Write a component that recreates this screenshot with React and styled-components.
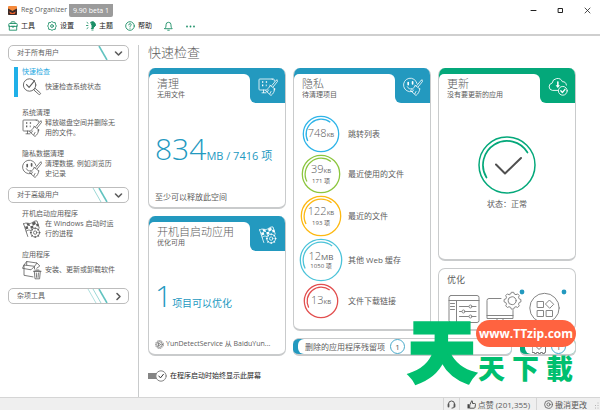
import React from 'react';
import styled, { createGlobalStyle } from 'styled-components';

const BLUE = '#2399bf';
const GREEN = '#04a87a';
const LINE = '#c9cbcc';
const INK = '#5c5c5c';

const Global = createGlobalStyle`
  * { box-sizing: border-box; }
  body {
    margin: 0;
    background: #fff;
    color: ${INK};
    font: 7px/10px "Open Sans", "Noto Sans CJK SC", sans-serif;
  }
  button { font: inherit; color: inherit; background: none; border: 0; padding: 0; margin: 0; }
  h1, h2, p { margin: 0; font-weight: 400; }
  svg { flex: none; }
`;

const Window = styled.div`
  min-height: 100vh;
  display: flex;
  flex-direction: column;
  position: relative;
`;
const TitleBar = styled.header`
  display: flex;
  align-items: center;
  height: 18px;
  padding: 2px 8px 0;
`;
const AppName = styled.span`
  margin: 0 2px 0 4px;
  white-space: nowrap;
`;
const Version = styled.span`
  background: #9b9b9b;
  color: #fff;
  line-height: 13px;
  padding: 0 4px;
  border-radius: 0 0 2px 2px;
  white-space: nowrap;
`;
const WindowButtons = styled.div`
  display: flex;
  gap: 18px;
  margin-left: auto;
`;
const WindowButton = styled.button`
  display: flex;
  align-items: center;
`;
const Toolbar = styled.nav`
  display: flex;
  align-items: center;
  gap: 12px;
  height: 18px;
  padding: 0 8px;
  border-bottom: 2px solid #cfcfcf;
  color: #222;
`;
const ToolButton = styled.button`
  display: flex;
  align-items: center;
  gap: 3px;
  white-space: nowrap;
`;
const Body = styled.div`
  flex: 1;
  display: flex;
`;
const Sidebar = styled.aside`
  flex: 0 0 138px;
  padding: 9px 9px 9px 8px;
`;
const GroupButton = styled.button`
  display: flex;
  align-items: center;
  width: 100%;
  height: 16px;
  padding: 0 5px 0 8px;
  border: 1px solid #bdbdbd;
  border-radius: 5px;
`;
const Stripes = styled.svg`
  margin-left: auto;
  margin-right: 5px;
`;
const Group = styled.div`
  display: grid;
  gap: 11px;
  padding: 6px 0 8px 6px;
`;
const NavItem = styled.a`
  display: block;
  height: 30px;
  padding-left: 4px;
  border-left: 4px solid ${(p) => (p.$active ? '#1fb0e8' : 'transparent')};
  color: inherit;
  text-decoration: none;
`;
const NavTitle = styled.span`
  display: block;
  color: ${(p) => (p.$active ? '#1fa9e1' : 'inherit')};
`;
const NavBody = styled.span`
  display: flex;
  align-items: center;
  gap: 3px;
  height: 20px;
  padding-right: 12px;
`;
const Main = styled.main`
  flex: 1;
  display: flex;
  flex-direction: column;
  margin-top: 9px;
  padding: 0 24px 15px 9px;
  border-left: 1px solid ${LINE};
`;
const PageTitle = styled.h1`
  font-size: 13px;
  line-height: 15px;
  font-weight: 300;
  margin-bottom: 8px;
`;
const Board = styled.div`
  flex: 1;
  display: grid;
  grid-template-columns: repeat(3, 1fr);
  gap: 7px;
`;
const Column = styled.div`
  display: flex;
  flex-direction: column;
  gap: 7px;
  min-width: 0;
`;
const Wide = styled(Column)`
  grid-column: span 2;
`;
const WideTop = styled.div`
  flex: 1;
  display: grid;
  grid-template-columns: 1fr 1fr;
  gap: 7px;
`;
const CardBox = styled.section`
  flex: 1 1 0;
  display: flex;
  flex-direction: column;
  min-width: 0;
  border: 1px solid ${LINE};
  border-bottom-width: 2px;
  border-top: 0;
  border-radius: 7px;
  overflow: hidden;
`;
const CardHead = styled.div`
  display: flex;
  background: ${(p) => p.$color};
`;
const CardTitles = styled.div`
  flex: 1;
  margin-top: 6px;
  padding: 3px 0 0 8px;
  background: #fff;
  border-radius: 5px 6px 0 0;
`;
const CardTitle = styled.h2`
  font-size: 11px;
  line-height: 13px;
  font-weight: 300;
`;
const TabCorner = styled.div`
  background: #fff;
`;
const Tab = styled.div`
  display: flex;
  align-items: center;
  justify-content: center;
  width: 35px;
  height: 35px;
  padding-top: 3px;
  background: ${(p) => p.$color};
  border-radius: 0 0 0 6px;
  color: #fff;
`;
const Metric = styled.p`
  display: flex;
  align-items: baseline;
  padding: 10px 0 0 6px;
  margin: auto 0;
  color: ${BLUE};
  font-size: ${(p) => p.$size};
  line-height: 32px;
  white-space: nowrap;
`;
const Big = styled.span`
  font-size: 30px;
  font-weight: 300;
`;
const CardNote = styled.p`
  display: flex;
  align-items: center;
  gap: 2px;
  padding: 0 6px 5px;
  font-size: ${(p) => (p.$small ? '7px' : '8px')};
  line-height: 10px;
  white-space: nowrap;
`;
const RingList = styled.ul`
  list-style: none;
  display: grid;
  gap: 1px;
  margin: 12px 0 0;
  padding: 0;
`;
const RingRow = styled.li`
  display: flex;
  align-items: center;
  font-size: 8px;
`;
const RingCell = styled.div`
  display: grid;
  place-items: center;
  width: 54px;
  > * { grid-area: 1 / 1; }
`;
const RingText = styled.div`
  text-align: center;
  font-size: 6px;
  line-height: 8px;
`;
const RingValue = styled.div`
  font-size: 11px;
  line-height: 11px;
  font-weight: 300;
`;
const Unit = styled.span`
  font-size: ${(p) => (p.$large ? '8px' : '6px')};
  font-weight: 400;
`;
const UpdateBox = styled.div`
  flex: 1;
  display: flex;
  flex-direction: column;
  align-items: center;
  gap: 5px;
  padding-top: 33px;
  font-size: 8px;
`;
const OptimizeBox = styled.section`
  height: 63px;
  padding: 5px 8px;
  border: 1px solid ${LINE};
  border-bottom-width: 2px;
  border-radius: 7px;
`;
const OptimizeTitle = styled.h2`
  font-size: 9px;
  line-height: 12px;
`;
const OptimizeIcons = styled.div`
  display: flex;
  justify-content: space-between;
  margin-top: 3px;
`;
const BottomRow = styled.div`
  display: flex;
  gap: 8px;
`;
const Strip = styled.button`
  flex: ${(p) => (p.$grow ? '1' : '0 0 56px')};
  display: flex;
  height: 18px;
  border: 1px solid ${LINE};
  border-left: 0;
  border-bottom-width: 2px;
  border-radius: 6px;
  background: ${(p) => p.$color};
  overflow: hidden;
`;
const StripInner = styled.span`
  flex: 1;
  display: flex;
  align-items: center;
  gap: 5px;
  height: 100%;
  margin-left: 5px;
  padding-left: 7px;
  background: #fff;
  border-radius: 6px 0 0 6px;
  font-size: 8px;
`;
const Count = styled.span`
  width: 15px;
  height: 15px;
  border: 1px solid #49a9c9;
  border-radius: 50%;
  line-height: 13px;
  text-align: center;
`;
const Toggle = styled.label`
  display: flex;
  align-items: center;
  gap: 3px;
  margin-top: 14px;
  height: 12px;
  color: #222;
`;
const ToggleInput = styled.input`
  appearance: none;
  width: 19px;
  height: 12px;
  margin: 0;
  background: linear-gradient(#858585, #858585) 0 50% / 13px 6px no-repeat;
  border-radius: 3px;
  grid-area: 1 / 1;
`;
const ToggleBox = styled.span`
  display: grid;
  justify-items: end;
  align-items: center;
  svg { grid-area: 1 / 1; pointer-events: none; }
`;
const StatusBar = styled.footer`
  display: flex;
  justify-content: flex-end;
  height: 13px;
  padding-right: 1px;
  background: #efefef;
  border-top: 1px solid #d5d5d5;
  font-size: 8px;
`;
const StatusButton = styled.button`
  display: flex;
  align-items: center;
  gap: 2px;
  padding: 1px 6px 0 7px;
  border-left: 1px solid #d5d5d5;
  white-space: nowrap;
  &:first-child { padding: 1px 3px 0; }
`;
const Watermark = styled.div`
  position: absolute;
  right: 24px;
  bottom: 24px;
  width: 168px;
  height: 72px;
  color: #00bf6f;
  font-family: "Noto Sans CJK SC", sans-serif;
  font-weight: 900;
  pointer-events: none;
`;
const MarkBig = styled.span`
  position: absolute;
  left: 0;
  top: 0;
  font-size: 68px;
  line-height: 68px;
  -webkit-text-stroke: 3px #00bf6f;
  stroke-linejoin: round;
`;
const MarkSmall = styled.span`
  position: absolute;
  right: 3px;
  bottom: 0;
  display: flex;
  gap: 7px;
  font-size: 27px;
  line-height: 36px;
  white-space: nowrap;
`;
const MarkPill = styled.span`
  position: absolute;
  right: 0;
  top: 6px;
  width: 100px;
  border-radius: 14px;
  background: #ff6340;
  color: #fff;
  font: 700 12px/27px "Open Sans", sans-serif;
  text-align: center;
`;

const Svg = ({ w, h, box, children, sw = 1, ...rest }) => (
  <svg width={w} height={h} viewBox={box || `0 0 ${w} ${h}`} fill="none" stroke="currentColor"
    strokeWidth={sw} strokeLinecap="round" strokeLinejoin="round" aria-hidden="true" {...rest}>{children}</svg>
);

const Brush = () => (
  <path d="M18.3 3.2 13.8 8.5M18.3 3.2c1-.8 2 .2 1.3 1.1l-4.3 5.4M12 8.3l4.8 3.6M12.2 8.5C11 11 9.5 12.5 7.5 13.6l5.5 4.9c2-1.6 3.4-3.6 3.8-6.6M10.5 13l-1 1.6M13 14.5l-1.2 2.3" />
);
const CleanIcon = ({ sw = 0.8, s = 20 }) => (
  <Svg w={s} h={s} box="0 0 20 20" sw={sw}>
    <path d="M14.5 2.3V2H1.8Q1 2 1 2.8v9.4q0 .8.8.8h6M16.3 4V3q0-1-1-1H14M16.4 12v1h-.6M5.5 13v2.6M4 15.8h4" />
    <path d="M4 5h1.3M7.8 5h1.3M4 8.4h1.3M7.8 8.4h.8" strokeWidth="1.6" strokeLinecap="butt" />
    <Brush />
  </Svg>
);
const PrivacyIcon = ({ sw = 0.8, s = 20 }) => (
  <Svg w={s} h={s} box="0 0 20 20" sw={sw}>
    <path d="M9 14.6A6.8 6.8 0 1 1 14 6.5M4.3 9.7c1 2 2.6 2.7 4.6 2" />
    <path d="M5.2 5.6v2M9.6 4.8v2" strokeWidth="1.7" />
    <Brush />
  </Svg>
);
const StartupIcon = ({ sw = 0.8, s = 20 }) => (
  <Svg w={s} h={s} box="0 0 20 20" sw={sw}>
    <path d="M1.5 4.5 5.8 17.5M1.7 5C4.5 2.5 7 5.6 9.5 4S13.5 1.5 15 2l2.2 7M4.2 12.2c1.5-1.3 2.8-1.4 4.4-.8" />
    <path d="m4.5 4 2.8.4.8 2.7-2.9-.6zM10 4l3-1.7.9 2.6-3 1.8zM3 7.8l2.6-.9.8 2.6-2.6.9zM8.2 7.2l2.8-.5.6 2.3-2.7.7zM14 4.9l2.2-.3.8 2.5-2.3.5z" fill="currentColor" stroke="none" />
    <circle cx="13.2" cy="13.6" r="4.4" />
    <circle cx="13.2" cy="13.6" r="1.7" />
    <path d="M13.2 8.8v1M13.2 17.4v1M8.4 13.6h1M17 13.6h1M9.8 10.2l.7.7M16 16.4l.7.7M16.6 10.2l-.7.7M10.4 16.4l-.7.7" strokeWidth="1.1" />
  </Svg>
);
const CheckupIcon = () => (
  <Svg w={20} h={20} sw={0.9}>
    <circle cx="7.6" cy="8" r="6.2" />
    <path d="m4.5 7.6 2.6 2.8L12.6 3.6" strokeWidth="1.1" />
    <path d="m12 12.6 1.2-1.2 5 4.4c1 1-.5 2.5-1.5 1.5z" />
  </Svg>
);
const AppsIcon = () => (
  <Svg w={20} h={20} sw={0.8}>
    <path d="m2 5 2.7-3.5L15 3l-2.5 3.3L2 5v10.3l9 1.6M2 5 .5 8.3 9 9.8l3.5-3.5V9M4.7 1.5V5M15 3l2.8 3-3 2.2" />
    <path d="M12.3 11.5 13 18.8h4.6l.7-7.3zM11.5 11.3h7.6M13.8 10h3M14.3 13l.3 4.4M16.4 13l-.3 4.4" />
  </Svg>
);
const CloudIcon = () => (
  <Svg w={20} h={20} sw={0.9}>
    <path d="M10 13.4H4.4a3.7 3.7 0 0 1-.3-7.3A5.4 5.4 0 0 1 14.4 4.7a3.8 3.8 0 0 1 4 3.4M9.8 5v4" />
    <path d="M7.6 8.2h4.4L9.8 11z M9.2 4.6h1.3V9H9.2z" fill="currentColor" stroke="none" />
    <circle cx="14.8" cy="13.8" r="4.4" />
    <path d="m12.8 13.8 1.6 1.7 2.6-3.2" strokeWidth="1.3" />
  </Svg>
);

const Ring = ({ r, color }) => {
  const c = r + 1;
  const k = r - 3;
  const x1 = c - k * 0.88, y1 = c + k * 0.47, x2 = c + k * 0.62, y2 = c - k * 0.78;
  return (
    <svg width={c * 2} height={c * 2} fill="none" stroke={color} aria-hidden="true">
      <circle cx={c} cy={c} r={r - 0.3} strokeWidth="1.3" />
      <path d={`M${x1} ${y1}A${k} ${k} 0 0 1 ${x2} ${y2}`} strokeWidth="1.3" />
    </svg>
  );
};

const rings = [
  { n: '748', u: 'KB', label: '跳转列表', r: 18, color: '#2fb4e8' },
  { n: '39', u: 'KB', sub: '171 项', label: '最近使用的文件', r: 19, color: '#8cc63f' },
  { n: '122', u: 'KB', sub: '193 项', label: '最近的文件', r: 20, color: '#fdb913' },
  { n: '12', u: 'MB', sub: '1050 项', label: '其他 Web 缓存', r: 21, color: '#4cc3d9', large: true },
  { n: '13', u: 'KB', label: '文件下载链接', r: 17, color: '#e25050' },
];

const Card = ({ title, sub, color, icon, children }) => (
  <CardBox>
    <CardHead $color={color}>
      <CardTitles>
        <CardTitle>{title}</CardTitle>
        <p>{sub}</p>
      </CardTitles>
      <TabCorner><Tab $color={color}>{icon}</Tab></TabCorner>
    </CardHead>
    {children}
  </CardBox>
);

const GroupHead = ({ label, stripes, open }) => (
  <GroupButton aria-expanded={open}>
    {label}
    <Stripes width="22" height="14" fill="none" stroke="#62c3c0" aria-hidden="true">
      <path d="m12 0 8 14" strokeWidth="1.6" />
      {stripes > 1 && <path d="m6 0 8 14" stroke="#9bd8d6" />}
      {stripes > 2 && <path d="m1 0 8 14" stroke="#9bd8d6" strokeWidth=".8" />}
    </Stripes>
    <Svg w={9} h={9} sw={1.6}>{open ? <path d="m1.5 3 3 3 3-3" /> : <path d="m3 1.5 3 3-3 3" />}</Svg>
  </GroupButton>
);

const Nav = ({ title, icon, active, children }) => (
  <NavItem href="#" $active={active}>
    <NavTitle $active={active}>{title}</NavTitle>
    <NavBody>{icon}<span>{children}</span></NavBody>
  </NavItem>
);

export default function App() {
  return (
    <Window lang="zh-CN">
      <Global />
      <TitleBar>
        <svg width="9" height="9" aria-hidden="true">
          <rect width="9" height="9" rx="1" fill="#f58a3c" />
          <path d="M0 2.5 3 4l1.500 1L6 4l3-1.500V8q0 1-1 1H1Q0 9 0 8z" fill="#3a2a28" />
          <path d="M1 5.500 4.500 7 8 5.500 6.500 8h-4z" fill="#f0642c" />
        </svg>
        <AppName>Reg Organizer</AppName>
        <Version>9.90 beta 1</Version>
        <WindowButtons>
          <WindowButton aria-label="最小化"><Svg w={9} h={9}><path d="M2 4.500h5" stroke="#222" /></Svg></WindowButton>
          <WindowButton aria-label="最大化"><Svg w={9} h={9}><path d="M2.500 2.500h4v4h-4z" stroke="#222" /></Svg></WindowButton>
          <WindowButton aria-label="关闭"><Svg w={9} h={9} sw={0.8}><path d="m2 2 5 5M7 2 2 7" stroke="#222" /></Svg></WindowButton>
        </WindowButtons>
      </TitleBar>
      <Toolbar>
        <ToolButton>
          <Svg w={10} h={10} stroke="#1d9068" sw={0.9}><path d="M3 2.500v-1q0-.7.7-.7h2.600q.7 0 .7.7v1M.8 5V3.200q0-.7.7-.7h7q.7 0 .7.7V5zM1.300 5v4.200h7.400V5M4 5v1h2V5" /></Svg>
          工具
        </ToolButton>
        <ToolButton>
          <Svg w={10} h={10} stroke="#1d9068" sw={0.9}><path d="m5 .7 1.600.8 1.700.2.2 1.700.8 1.600-.8 1.600-.2 1.700-1.700.2L5 9.300l-1.600-.8-1.700-.2-.2-1.700L.7 5l.8-1.600.2-1.700 1.700-.2z" /><circle cx="5" cy="5" r="1.400" /></Svg>
          设置
        </ToolButton>
        <ToolButton>
          <Svg w={10} h={10} stroke="#1d9068" sw={0.9}><path d="M5 1.200a2.800 2.800 0 0 1 2.800 5q-.6.5-.6 1.300H5.300M5.800 9h1.300M1 1.500l1 .7M.5 4.500h1.400M1 7.500l1-.7" /><path d="M5 1.200a2.800 2.800 0 0 1 2.800 5q-.6.5-.6 1.300H6V5z" fill="#1d9068" /></Svg>
          主题
        </ToolButton>
        <ToolButton>
          <Svg w={10} h={10} stroke="#1d9068" sw={0.9}><circle cx="5" cy="5" r="4.300" /><path d="M3.800 3.900q.1-1.300 1.300-1.300 1.100.1 1.100 1.100C6.200 4.500 5 4.600 5 5.700M5 7.100v.2" /></Svg>
          帮助
        </ToolButton>
        <ToolButton aria-label="通知">
          <Svg w={9} h={10} stroke="#1d9068" sw={0.9}><path d="M.8 7.700h7.400Q7 6.500 7 5V3.800a2.500 2.500 0 0 0-5 0V5Q2 6.500.8 7.700zM3.700 9.200h1.600" /></Svg>
        </ToolButton>
        <ToolButton aria-label="更多">
          <svg width="12" height="10" fill="#1d9068" aria-hidden="true"><circle cx="2" cy="5.500" r=".9" /><circle cx="5.500" cy="5.500" r=".9" /><circle cx="9" cy="5.500" r=".9" /></svg>
        </ToolButton>
      </Toolbar>

      <Body>
        <Sidebar>
          <GroupHead label="对于所有用户" stripes={1} open />
          <Group>
            <Nav title="快速检查" icon={<CheckupIcon />} active>快速检查系统状态</Nav>
            <Nav title="系统清理" icon={<CleanIcon />}>释放磁盘空间并删除无用的文件。</Nav>
            <Nav title="隐私数据清理" icon={<PrivacyIcon />}>清理数据, 例如浏览历史记录</Nav>
          </Group>
          <GroupHead label="对于高级用户" stripes={2} open />
          <Group>
            <Nav title="开机启动应用程序" icon={<StartupIcon />}>在 Windows 启动时运行的进程</Nav>
            <Nav title="应用程序" icon={<AppsIcon />}>安装、更新或卸载软件</Nav>
          </Group>
          <GroupHead label="杂项工具" stripes={3} open={false} />
        </Sidebar>

        <Main>
          <PageTitle>快速检查</PageTitle>
          <Board>
            <Column>
              <Card title="清理" sub="无用文件" color={BLUE} icon={<CleanIcon />}>
                <Metric $size="11px"><Big>834</Big>MB / 7416 项</Metric>
                <CardNote>至少可以释放此空间</CardNote>
              </Card>
              <Card title="开机自启动应用" sub="优化可用" color={BLUE} icon={<StartupIcon />}>
                <Metric $size="10px"><Big>1</Big>项目可以优化</Metric>
                <CardNote $small>
                  <Svg w={9} h={9} sw={0.7}><circle cx="4.500" cy="4.500" r="3.900" strokeDasharray="1.600 .6" strokeLinecap="butt" /><circle cx="4.500" cy="4.500" r="2.800" /><path d="m3.800 3.200 2 1.300-2 1.300z" /></Svg>
                  YunDetectService 从 BaiduYun...
                </CardNote>
              </Card>
            </Column>
            <Wide>
              <WideTop>
                <Card title="隐私" sub="待清理项目" color={BLUE} icon={<PrivacyIcon />}>
                  <RingList>
                    {rings.map((g) => (
                      <RingRow key={g.label}>
                        <RingCell>
                          <Ring r={g.r} color={g.color} />
                          <RingText>
                            <RingValue>{g.n}<Unit $large={g.large}>{g.u}</Unit></RingValue>
                            {g.sub}
                          </RingText>
                        </RingCell>
                        {g.label}
                      </RingRow>
                    ))}
                  </RingList>
                </Card>
                <Column>
                  <Card title="更新" sub="没有要更新的应用" color={GREEN} icon={<CloudIcon />}>
                    <UpdateBox>
                      <Svg w={58} h={58} stroke={GREEN} sw={1.5}>
                        <circle cx="29" cy="29" r="28" />
                        <path d="M8.500 41.500A24 24 0 0 1 49.500 16.500" strokeWidth="1.700" />
                        <path d="m18 28.500 9 9 16-15.500" stroke="#505050" strokeWidth="2" />
                      </Svg>
                      状态：正常
                    </UpdateBox>
                  </Card>
                  <OptimizeBox>
                    <OptimizeTitle>优化</OptimizeTitle>
                    <OptimizeIcons>
                      <Svg w={34} h={34} stroke="#858585">
                        <path d="M4 6.500h26q2 0 2 2v23q0 2-2 2H4q-2 0-2-2v-23q0-2 2-2zM2 11.500h30M9.500 12v21M3.500 14.500h4M3.500 17.500h4M3.500 20.500h4M12.500 17.500h9M25 17.500h4M12.500 22.500h2M18 22.500h11M12.500 27.500h9M25 27.500h4" />
                        <circle cx="23.500" cy="17.500" r="1.500" /><circle cx="16.500" cy="22.500" r="1.500" /><circle cx="23.500" cy="27.500" r="1.500" />
                      </Svg>
                      <Svg w={40} h={34} stroke="#858585">
                        <path d="M16 9.500H4q-2 0-2 2v18h26v-8M2 26.500h26M12 30v3M18 30v3" />
                        <path d="m24.700 5.200 1-.2.600-1.700h2.400l.6 1.700 1.700.700 1.600-.8 1.700 1.700-.8 1.600.7 1.700 1.700.6v2.400l-1.700.6-.7 1.700.8 1.600-1.700 1.700-1.600-.8-1.700.7-.6 1.700h-2.400l-.6-1.700-1.700-.7-1.600.8-1.700-1.700.8-1.600-.7-1.700-1.700-.6v-2.400l1.700-.6.7-1.700-.8-1.600 1.700-1.700 1.600.8z" />
                        <circle cx="27.200" cy="11.700" r="4" />
                        <circle cx="37" cy="3" r="2.400" fill={BLUE} stroke="none" />
                      </Svg>
                      <Svg w={38} h={34} stroke="#858585">
                        <circle cx="15.500" cy="19" r="14.700" />
                        <path d="M8.500 12.500h6v6h-6zM8.500 21.500h6v6h-6zM17.500 21.500h6v6h-6zM20.700 11.300l4 4-4 4-4-4z" />
                        <circle cx="35" cy="3" r="2.400" fill={BLUE} stroke="none" />
                      </Svg>
                    </OptimizeIcons>
                  </OptimizeBox>
                </Column>
              </WideTop>
              <BottomRow>
                <Strip $grow $color={BLUE}>
                  <StripInner>删除的应用程序残留项<Count>1</Count></StripInner>
                </Strip>
                <Strip $color={GREEN}>
                  <StripInner>
                    <Svg w={14} h={15} stroke="#777"><path d="M.5.500h13v13h-1v1h-2v-1h-2v1h-2v-1h-2v1h-2v-1h-2zM4.500 8 7 10.500 9.500 8" /></Svg>
                    <Count>1</Count>
                  </StripInner>
                </Strip>
              </BottomRow>
            </Wide>
          </Board>
          <Toggle>
            <ToggleBox>
              <ToggleInput type="checkbox" defaultChecked />
              <Svg w={12} h={12} stroke="#858585"><circle cx="6" cy="6" r="5.200" fill="#fff" /><path d="m3.800 6 1.700 1.900 2.900-3.600" stroke="#333" /></Svg>
            </ToggleBox>
            在程序启动时始终显示此屏幕
          </Toggle>
        </Main>
      </Body>

      <StatusBar>
        <StatusButton aria-label="支持">
          <Svg w={9} h={9} stroke="#555"><path d="M1.500 5V4a3 3 0 0 1 6 0v1M7.500 6.500q0 1.700-2.500 1.700" /><path d="M1.500 4.500v2M7.500 4.500v2" strokeWidth="1.800" /></Svg>
        </StatusButton>
        <StatusButton>
          <Svg w={9} h={9} stroke="#444" sw={0.9}><path d="M3 8.200h4q.8 0 1-.8l.5-3q.1-.9-.8-.9H5.500V1.500Q5.400.700 4.700.800L3 4.500z" /><path d="M.5 4.200h1.800v4.200H.5z" fill="#444" stroke="none" /></Svg>
          点赞 (201,355)
        </StatusButton>
        <StatusButton>
          <Svg w={9} h={9} stroke="#666" sw={0.9}><circle cx="4.500" cy="4.500" r="3.900" /><circle cx="4.500" cy="4.500" r="1.600" /></Svg>
          撤消更改
        </StatusButton>
        <Svg w={6} h={11} stroke="#aaa" sw={1}><path d="M5 5v.1M5 7.500v.1M5 10v.1M2.500 7.500v.1M2.500 10v.1" /></Svg>
      </StatusBar>

      <Watermark>
        <MarkBig>天</MarkBig>
        <MarkSmall><span>天</span><span>下</span><span>載</span></MarkSmall>
        <MarkPill>www.TTzip.com</MarkPill>
      </Watermark>
    </Window>
  );
}
